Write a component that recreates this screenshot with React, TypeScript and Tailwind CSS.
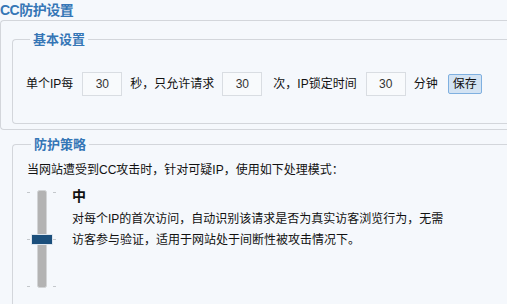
const FONT = "font-['Liberation_Sans','Noto_Sans_CJK_SC',sans-serif]";

function NumBox({ value, className = '' }: { value: string; className?: string }) {
  return (
    <input
      readOnly
      value={value}
      className={`w-[40px] h-[24px] border border-[#d9dde2] bg-[#f8fafc] text-center text-[12px] text-[#333] outline-none ${className}`}
    />
  );
}

function LevelSlider() {
  return (
    <svg width="30" height="102" viewBox="0 0 30 102" className="shrink-0">
      {[4, 51, 98].map((y) => (
        <g key={y} stroke="#c4c8cc" strokeWidth="1">
          <line x1="0" y1={y + 0.5} x2="3" y2={y + 0.5} />
          <line x1="26" y1={y + 0.5} x2="29" y2={y + 0.5} />
        </g>
      ))}
      <rect x="10.5" y="2.5" width="9" height="97" rx="2" fill="#b3b3b3" stroke="#d2d4d6" />
      <rect x="4.5" y="46.5" width="21" height="10" fill="#1b4f7c" stroke="#dfe6ee" />
    </svg>
  );
}

export default function App() {
  return (
    <div className={`w-[507px] h-[304px] overflow-hidden bg-[#f5f8fc] text-[#111] ${FONT}`}>
      <div className="h-[20px] leading-[20px] text-[14px] tracking-[-0.5px] font-bold text-[#3576b6]">CC防护设置</div>

      <div className="h-[110px] border-t border-l border-b border-[#d3d6db] rounded-l-[4px] pl-[11px]">
        <fieldset className="mt-[12px] h-[91px] border-t border-l border-b border-[#d3d6db] rounded-l-[4px] pl-[13px]">
          <legend className="ml-[4px] px-[3px] text-[13px] leading-[13px] font-bold text-[#3576b6]">基本设置</legend>
          <div className="flex items-center h-[24px] mt-[26px] text-[12px]">
            <span>单个IP每</span>
            <NumBox value="30" className="ml-[9px]" />
            <span className="ml-[8px]">秒，只允许请求</span>
            <NumBox value="30" className="ml-[8px]" />
            <span className="ml-[11px]">次，IP锁定时间</span>
            <NumBox value="30" className="ml-[9px]" />
            <span className="ml-[8px]">分钟</span>
            <button className="ml-[10px] h-[20px] px-[4px] border border-[#7fb0e0] rounded-[2px] bg-[#d3e3f3] text-[12px] leading-[18px] text-[#111]">
              保存
            </button>
          </div>
        </fieldset>
      </div>

      <fieldset className="mt-[8px] ml-[12px] h-[200px] border-t border-l border-[#d3d6db] rounded-tl-[4px] pl-[14px]">
        <legend className="ml-[4px] px-[3px] text-[13px] leading-[13px] font-bold text-[#3576b6]">防护策略</legend>
        <div className="mt-[9px] text-[12px] leading-[20px]">当网站遭受到CC攻击时，针对可疑IP，使用如下处理模式：</div>
        <div className="flex mt-[6px]">
          <div className="pt-[2px]">
            <LevelSlider />
          </div>
          <div className="ml-[15px]">
            <div className="text-[14px] leading-[20px] font-bold">中</div>
            <div className="mt-[3px] text-[12px] leading-[21px]">
              <div>对每个IP的首次访问，自动识别该请求是否为真实访客浏览行为，无需</div>
              <div>访客参与验证，适用于网站处于间断性被攻击情况下。</div>
            </div>
          </div>
        </div>
      </fieldset>
    </div>
  );
}
